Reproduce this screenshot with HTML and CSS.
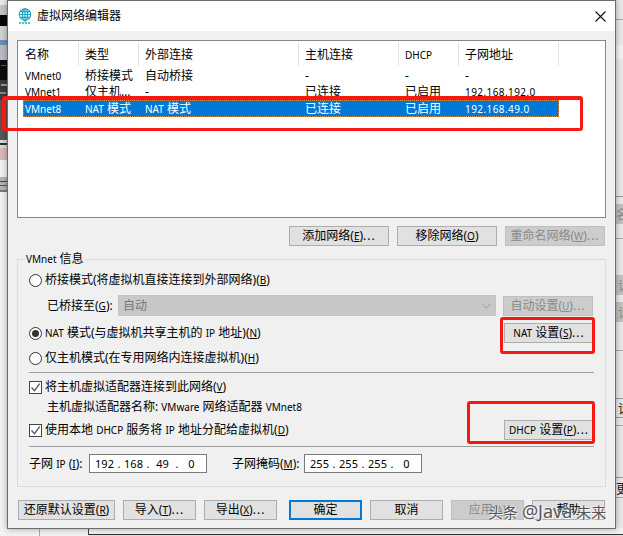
FILE: index.html
```html
<!DOCTYPE html>
<html lang="zh-CN">
<head>
<meta charset="utf-8">
<title>虚拟网络编辑器</title>
<link rel="stylesheet" href="styles.css">
</head>
<body>
<svg class="desktop" width="623" height="536" viewBox="0 0 623 536" aria-hidden="true">
  <rect x="0" y="0" width="7" height="5" fill="#e8e8e8"/>
  <rect x="0" y="5" width="7" height="10" fill="#c4c4c4"/>
  <rect x="0" y="15" width="7" height="11" fill="#060606"/>
  <rect x="0" y="26" width="7" height="14" fill="#cfcfcf"/>
  <rect x="0" y="40" width="7" height="5" fill="#6a90ba"/>
  <rect x="0" y="45" width="7" height="15" fill="#b9bcc0"/>
  <rect x="0" y="60" width="7" height="20" fill="#0c0c0e"/>
  <rect x="1" y="65" width="5" height="1" fill="#8a4a50"/>
  <rect x="0" y="80" width="7" height="20" fill="#3a3a3a"/>
  <rect x="1" y="84" width="6" height="2" fill="#9a9a9a"/>
  <rect x="0" y="92" width="6" height="2" fill="#888"/>
  <rect x="0" y="100" width="7" height="40" fill="#565656"/>
  <rect x="0" y="140" width="7" height="8" fill="#d8d8d8"/>
  <rect x="0" y="143" width="7" height="2" fill="#333"/>
  <rect x="0" y="148" width="7" height="12" fill="#d9b8b8"/>
  <rect x="0" y="160" width="7" height="17" fill="#f2f2f2"/>
  <rect x="0" y="177" width="7" height="13" fill="#b4b4b4"/>
  <rect x="0" y="181" width="7" height="1" fill="#444"/>
  <rect x="0" y="185" width="7" height="1" fill="#555"/>
  <rect x="0" y="190" width="7" height="2" fill="#777"/>
  <rect x="0" y="192" width="7" height="344" fill="#f2f2f2"/>
  <rect x="616" y="0" width="7" height="528" fill="#e9e9e9"/>
  <rect x="616" y="19" width="7" height="1" fill="#a8a8a8"/>
  <rect x="616" y="45" width="7" height="14" fill="#f2f2f2"/>
  <rect x="616" y="196" width="7" height="1" fill="#999"/>
  <rect x="616" y="204" width="7" height="20" fill="#c2c2c2"/>
  <rect x="616" y="238" width="7" height="1" fill="#aaa"/>
  <rect x="616" y="275" width="7" height="20" fill="#c2c2c2"/>
  <rect x="616" y="302" width="7" height="20" fill="#c2c2c2"/>
  <rect x="616" y="350" width="7" height="1" fill="#aaa"/>
  <rect x="616" y="398" width="7" height="1" fill="#999"/>
  <rect x="616" y="417" width="7" height="1" fill="#999"/>
  <rect x="616" y="425" width="7" height="1" fill="#aaa"/>
  <rect x="616" y="477" width="7" height="1" fill="#999"/>
  <rect x="616" y="497" width="7" height="1" fill="#aaa"/>
  <rect x="39" y="528" width="1" height="8" fill="#aaa"/>
  <rect x="88" y="528" width="1" height="7" fill="#444"/>
  <rect x="88" y="534" width="535" height="1" fill="#333"/>
  <rect x="89" y="535" width="534" height="1" fill="#ddd"/>
  <text class="desktop-glyph" x="616" y="219">名</text>
  <text class="desktop-glyph" x="618" y="290">设</text>
  <text class="desktop-glyph" x="618" y="317">设</text>
  <text class="desktop-glyph dark" x="618" y="413">设</text>
  <text class="desktop-glyph dark" x="616" y="493">更</text>
</svg>

<div class="dialog">
  <header class="titlebar">
    <svg class="app-icon" width="14" height="17" viewBox="0 0 14 17" aria-hidden="true">
      <g fill="none" stroke="#17a2c4" stroke-width="1.1">
        <circle cx="7" cy="6.5" r="5.7"/>
        <ellipse cx="7" cy="6.5" rx="2.6" ry="5.7"/>
        <path d="M1.3 6.5h11.4M2.2 3.6h9.6M2.2 9.4h9.6M7 .8v11.4"/>
        <path d="M7 12.2v2"/>
      </g>
      <path d="M1 15h12" stroke="#14b49a" stroke-width="1.4" stroke-dasharray="2 1"/>
    </svg>
    <span class="title">虚拟网络编辑器</span>
    <svg class="close" width="11" height="11" viewBox="0 0 11 11" aria-hidden="true">
      <path d="M.5.5l10 10M10.5.5l-10 10" stroke="#111" stroke-width="1.1" fill="none"/>
    </svg>
  </header>

  <main class="client">
    <section class="list">
      <div class="list-head">
        <span class="hcell first">名称</span>
        <span class="hcell w60">类型</span>
        <span class="hcell w160">外部连接</span>
        <span class="hcell w100">主机连接</span>
        <span class="hcell w60"><span class="en">DHCP</span></span>
        <span class="hcell w100">子网地址</span>
      </div>
      <div class="list-row">
        <span class="en">VMnet0</span><span>桥接模式</span><span>自动桥接</span><span>-</span><span>-</span><span>-</span>
      </div>
      <div class="list-row">
        <span class="en">VMnet1</span><span>仅主机…</span><span>-</span><span>已连接</span><span>已启用</span><span class="en num">192.168.192.0</span>
      </div>
      <div class="list-row selected">
        <span class="en">VMnet8</span><span><span class="en">NAT</span> 模式</span><span><span class="en">NAT</span> 模式</span><span>已连接</span><span>已启用</span><span class="en num">192.168.49.0</span>
      </div>
    </section>

    <div class="list-actions">
      <button class="btn w100b">添加网络(<u class="en">E</u>)<span class="dots">...</span></button>
      <button class="btn w100b">移除网络(<u class="en">O</u>)</button>
      <button class="btn w100b disabled">重命名网络(<u class="en">W</u>)<span class="dots">...</span></button>
    </div>

    <section class="group">
      <span class="legend"><span class="en">VMnet</span> 信息</span>

      <div class="row first-row">
        <span class="radio"></span>
        <span>桥接模式(将虚拟机直接连接到外部网络)(<u class="en">B</u>)</span>
      </div>

      <div class="row bridge-row">
        <span class="bridge-label">已桥接至(<u class="en">G</u>):</span>
        <div class="select">
          <span>自动</span>
          <svg width="9" height="6" viewBox="0 0 9 6" aria-hidden="true"><path d="M.5 1l4 4 4-4" fill="none" stroke="#9a9a9a"/></svg>
        </div>
        <button class="btn side disabled">自动设置(<u class="en">U</u>)<span class="dots">...</span></button>
      </div>

      <div class="row nat-row">
        <span class="radio on"></span>
        <span><span class="en">NAT</span> 模式(与虚拟机共享主机的 <span class="en">IP</span> 地址)(<u class="en">N</u>)</span>
        <button class="btn side push"><span class="en">NAT</span>&nbsp;设置(<u class="en">S</u>)<span class="dots">...</span></button>
      </div>

      <div class="row host-row">
        <span class="radio"></span>
        <span>仅主机模式(在专用网络内连接虚拟机)(<u class="en">H</u>)</span>
      </div>

      <hr class="sep sep-a">

      <div class="row">
        <span class="check"><svg width="11" height="11" viewBox="0 0 11 11" aria-hidden="true"><path d="M1.5 5.5l3 3.2 5.2-7" fill="none" stroke="#555" stroke-width="1.3"/></svg></span>
        <span>将主机虚拟适配器连接到此网络(<u class="en">V</u>)</span>
      </div>

      <div class="row adapter-name"><span>主机虚拟适配器名称: <span class="en">VMware</span> 网络适配器 <span class="en">VMnet8</span></span></div>

      <div class="row dhcp-row">
        <span class="check"><svg width="11" height="11" viewBox="0 0 11 11" aria-hidden="true"><path d="M1.5 5.5l3 3.2 5.2-7" fill="none" stroke="#555" stroke-width="1.3"/></svg></span>
        <span>使用本地 <span class="en">DHCP</span> 服务将 <span class="en">IP</span> 地址分配给虚拟机(<u class="en">D</u>)</span>
        <button class="btn side push"><span class="en">DHCP</span>&nbsp;设置(<u class="en">P</u>)<span class="dots">...</span></button>
      </div>

      <hr class="sep sep-b">

      <div class="row subnet-row">
        <span class="ip-label">子网 <span class="en">IP</span> (<u class="en">I</u>):</span>
        <div class="ip-input">
          <span class="seg">192</span><span class="dot">.</span><span class="seg">168</span><span class="dot">.</span><span class="seg">49</span><span class="dot">.</span><span class="seg">0</span>
        </div>
        <span class="mask-label">子网掩码(<u class="en">M</u>):</span>
        <div class="ip-input">
          <span class="seg">255</span><span class="dot">.</span><span class="seg">255</span><span class="dot">.</span><span class="seg">255</span><span class="dot">.</span><span class="seg">0</span>
        </div>
      </div>
    </section>

    <footer class="footer">
      <button class="btn restore">还原默认设置(<u class="en">R</u>)</button>
      <button class="btn w73">导入(<u class="en">T</u>)<span class="dots">...</span></button>
      <button class="btn w73">导出(<u class="en">X</u>)<span class="dots">...</span></button>
      <button class="btn w73 default">确定</button>
      <button class="btn w73">取消</button>
      <button class="btn w73 disabled">应用(<u class="en">A</u>)</button>
      <button class="btn w73">帮助</button>
    </footer>
  </main>
</div>

<div class="mark mark-list"></div>
<div class="mark mark-nat"></div>
<div class="mark mark-dhcp"></div>
<div class="watermark">头条 <span class="wm-en">@Java</span>未来</div>
</body>
</html>
```

FILE: styles.css
```css
* { box-sizing: border-box; }

html, body {
  margin: 0;
  padding: 0;
}

body {
  position: relative;
  width: 623px;
  height: 536px;
  overflow: hidden;
  background: #f2f2f2;
  font-family: "Noto Sans", "Noto Sans CJK SC", sans-serif;
  font-size: 12px;
  line-height: 16px;
  color: #000;
}

.en { font-size: 10px; }

.num { letter-spacing: 0.42px; }

.dots { letter-spacing: 1px; }

.desktop {
  position: absolute;
  left: 0;
  top: 0;
}

.desktop-glyph {
  font-family: "Noto Sans CJK SC", sans-serif;
  font-size: 13px;
  fill: #8c8c8c;
}

.desktop-glyph.dark { fill: #222; }

.dialog {
  position: relative;
  width: 609px;
  height: 529px;
  margin-left: 7px;
  background: #f0f0f0;
  border: 1px solid #6d6d6d;
  box-shadow: 0 0 6px rgba(0, 0, 0, 0.35);
}

.titlebar {
  display: flex;
  align-items: center;
  height: 30px;
  padding: 0 9px 0 10px;
  background: #fff;
}

.app-icon { margin-right: 5px; }

.title { font-size: 12px; }

.close { margin-left: auto; }

.client {
  padding: 9px 9px 0;
}

.list {
  width: 589px;
  height: 178px;
  background: #fff;
  border: 1px solid #82878d;
}

.list-head {
  display: flex;
  height: 25px;
  padding-top: 1px;
}

.hcell {
  display: flex;
  align-items: center;
  padding-top: 1px;
  padding-left: 6px;
  border-right: 1px solid #e3e3e3;
}

.hcell.first { width: 61px; padding-left: 7px; }
.w60 { width: 60px; }
.w100 { width: 100px; }
.w160 { width: 160px; }

.list-row {
  display: grid;
  grid-template-columns: 60px 60px 160px 100px 60px 96px;
  align-items: center;
  height: 16px;
  margin-left: 5px;
  padding-left: 2px;
  white-space: nowrap;
  width: 536px;
}

.list-head + .list-row { margin-top: 2px; }

.list-row.selected {
  height: 17px;
  background: #0078d7;
  color: #fff;
  outline: 1px dotted #d8934a;
  outline-offset: -1px;
}

.btn {
  display: inline-flex;
  align-items: center;
  justify-content: center;
  height: 20px;
  padding: 0;
  font: inherit;
  color: #000;
  background: #e1e1e1;
  border: 1px solid #adadad;
  white-space: nowrap;
}

.btn u { text-underline-offset: 1px; }

.btn.disabled {
  color: #8a8a8a;
  background: #cccccc;
  border-color: #bfbfbf;
}

.btn.default {
  border: 2px solid #0078d7;
}

.list-actions {
  display: flex;
  justify-content: flex-end;
  gap: 8px;
  width: 588px;
  margin-top: 8px;
}

.w100b { width: 100px; }

.group {
  position: relative;
  width: 589px;
  height: 228px;
  margin-top: 13px;
  padding: 10px 11px 0;
  border: 1px solid #dcdcdc;
}

.legend {
  position: absolute;
  left: 7px;
  top: -9px;
  padding: 0 1px;
  background: #f0f0f0;
}

.row {
  display: flex;
  align-items: center;
  height: 20px;
  white-space: nowrap;
}

.radio {
  flex: none;
  position: relative;
  width: 13px;
  height: 13px;
  margin-right: 3px;
  background: #fff;
  border: 1px solid #333;
  border-radius: 50%;
}

.radio.on::after {
  content: "";
  position: absolute;
  left: 2px;
  top: 2px;
  width: 7px;
  height: 7px;
  border-radius: 50%;
  background: #333;
}

.check {
  flex: none;
  display: flex;
  align-items: center;
  justify-content: center;
  width: 13px;
  height: 13px;
  margin-right: 3px;
  background: #fff;
  border: 1px solid #444;
}

.bridge-row {
  height: 21px;
  margin-top: 5px;
  padding-left: 18px;
}

.bridge-label { width: 71px; }

.select {
  display: flex;
  align-items: center;
  justify-content: space-between;
  width: 378px;
  height: 21px;
  padding: 0 4px;
  color: #777;
  background: #c8c8c8;
  border: 1px solid #c4c4c4;
}

.btn.side {
  width: 90px;
  margin-left: 7px;
}

.btn.side.push { margin-left: auto; }

.nat-row { margin-top: 7px; }

.host-row { margin-top: 5px; }

.sep {
  height: 1px;
  margin: 0;
  border: 0;
  background: #a0a0a0;
}

.sep-a { margin: 4px 0; }

.adapter-name { padding-left: 18px; }

.dhcp-row { margin-top: 3px; }

.sep-b { margin: 6px 0 7px; }

.subnet-row { height: 19px; }

.ip-label { width: 60px; }

.ip-input {
  display: flex;
  align-items: center;
  width: 118px;
  height: 19px;
  padding-left: 4px;
  font-size: 11px;
  background: #fff;
  border: 1px solid #7a7a7a;
}

.seg {
  width: 21px;
  text-align: center;
}

.dot {
  width: 8px;
  text-align: center;
}

.mask-label {
  width: 72px;
  margin-left: 25px;
}

.footer {
  display: flex;
  gap: 8px;
  margin-top: 13px;
  padding-left: 1px;
}

.restore { width: 97px; }

.w73 { width: 73px; }

.btn.default { margin-left: 4px; }

.mark {
  position: absolute;
  border-style: solid;
  border-color: #f5190f;
  border-radius: 3px;
}

.mark-list {
  left: 2px;
  top: 96px;
  width: 581px;
  height: 35px;
  border-width: 4px 3px 3px 4px;
}

.mark-nat {
  left: 500px;
  top: 317px;
  width: 95px;
  height: 37px;
  border-width: 3px;
}

.mark-dhcp {
  left: 467px;
  top: 401px;
  width: 128px;
  height: 43px;
  border-width: 3px;
}

.watermark {
  position: absolute;
  left: 488px;
  top: 499px;
  font-size: 15px;
  line-height: 24px;
  white-space: nowrap;
  color: #555;
  text-shadow: 0 0 2px #fff, 1px 1px 1px #fff;
}

.wm-en {
  font-size: 18px;
  margin-right: 4px;
}
```
